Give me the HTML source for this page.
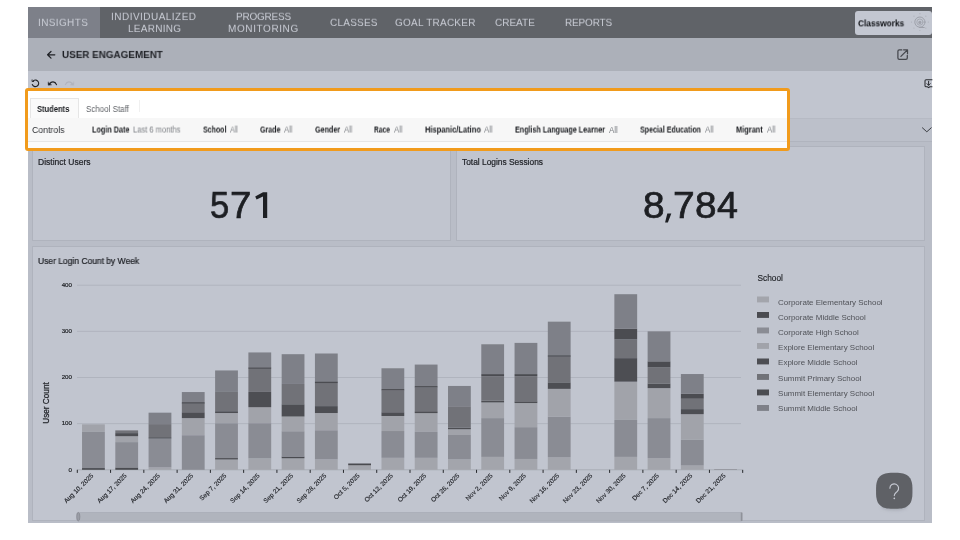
<!DOCTYPE html>
<html>
<head>
<meta charset="utf-8">
<title>User Engagement</title>
<style>
*{box-sizing:border-box;margin:0;padding:0}
html,body{width:960px;height:540px;overflow:hidden;background:#fff}
body{font-family:"Liberation Sans",sans-serif;position:relative;color:#1f2126}
.abs{position:absolute}
#app{position:absolute;left:28px;top:7px;width:904px;height:515.5px;background:#c1c5cf;overflow:hidden}
#nav{position:absolute;left:0;top:0;width:904px;height:31px;background:#606368}
#nav .tab{position:absolute;top:0;height:31px;color:#c6c9d2;font-size:10.5px;letter-spacing:.55px;line-height:11.5px;text-align:center;display:flex;align-items:center;justify-content:center;white-space:nowrap}
#nav .active{background:#7d8089}
#badge{position:absolute;left:827px;top:4px;width:76.5px;height:24px;background:#c3c7d1;border-radius:3px}
#badge span{position:absolute;left:5px;top:6px;font-size:9px;font-weight:bold;color:#2a2c31;letter-spacing:.1px}
#sub{position:absolute;left:0;top:31px;width:904px;height:32.5px;background:#acb0b9}
#sub .title{position:absolute;left:34px;top:10px;font-size:10.5px;font-weight:bold;letter-spacing:.5px;color:#1f2126;white-space:nowrap}
#ctrlrow{position:absolute;left:0;top:111px;width:904px;height:24px;background:#bcc0ca;border-top:1px solid #b6bac4;border-bottom:1px solid #b0b4be}
#gutter{position:absolute;left:0;top:135px;width:904px;height:381px;background:#b9bdc7}
.card{position:absolute;background:#c1c5cf;border:1px solid #afb3bd}
.card .ttl{position:absolute;left:5px;top:5px;font-size:8px;color:#1f2126;white-space:nowrap}
.kpi{position:absolute;font-size:37px;color:#1d1f23;white-space:nowrap;letter-spacing:.5px}
#hl{position:absolute;left:25px;top:88px;width:765px;height:63px;border:3px solid #f19b1c;border-radius:3px;background:#fff;overflow:hidden}
#hl .tabs{position:absolute;left:0;top:0;width:760px;height:27px;background:#fff}
#hl .ctr{position:absolute;left:0;top:27px;width:760px;height:24px;background:#f7f7f7;border-bottom:1px solid #e6e6e6}
#hl .bot{position:absolute;left:0;top:51px;width:760px;height:8px;background:#fbfbfb}
#hl .t1{position:absolute;left:2px;top:7px;width:49px;height:20px;background:#fafafa;border:1px solid #e6e6e6;border-bottom:none}
#hl .t2{position:absolute;left:51px;top:9px;width:60.5px;height:12px;border-right:1px solid #f0f0f0}
.tx{position:absolute;white-space:nowrap;font-size:8px;line-height:10px;will-change:transform}
.b{font-weight:bold;color:#16181c}
.g{color:#7f8287}
</style>
</head>
<body>
<div id="app">
  <div id="nav">
    <div class="abs" style="left:0;top:0;width:72px;height:31px;background:#7d8089"></div>
<span id="n1" class="tx" style="left:10.00px;top:9.80px;font-size:10px;line-height:12.0px;color:#c9ccd5;letter-spacing:0.368px;transform:scaleY(0.9200);transform-origin:0 9.50px;">INSIGHTS</span>
<span id="n2" class="tx" style="left:83.30px;top:3.50px;font-size:10px;line-height:12.0px;color:#c9ccd5;letter-spacing:0.469px;transform:scaleY(0.9200);transform-origin:0 9.50px;">INDIVIDUALIZED</span>
<span id="n3" class="tx" style="left:99.60px;top:15.60px;font-size:10px;line-height:12.0px;color:#c9ccd5;letter-spacing:0.282px;transform:scaleY(0.9200);transform-origin:0 9.50px;">LEARNING</span>
<span id="n4" class="tx" style="left:207.60px;top:3.50px;font-size:10px;line-height:12.0px;color:#c9ccd5;letter-spacing:-0.212px;transform:scaleY(0.9200);transform-origin:0 9.50px;">PROGRESS</span>
<span id="n5" class="tx" style="left:200.30px;top:15.60px;font-size:10px;line-height:12.0px;color:#c9ccd5;letter-spacing:0.599px;transform:scaleY(0.9200);transform-origin:0 9.50px;">MONITORING</span>
<span id="n6" class="tx" style="left:302.40px;top:9.80px;font-size:10px;line-height:12.0px;color:#c9ccd5;letter-spacing:0.228px;transform:scaleY(0.9200);transform-origin:0 9.50px;">CLASSES</span>
<span id="n7" class="tx" style="left:366.90px;top:9.80px;font-size:10px;line-height:12.0px;color:#c9ccd5;letter-spacing:0.237px;transform:scaleY(0.9200);transform-origin:0 9.50px;">GOAL TRACKER</span>
<span id="n8" class="tx" style="left:467.10px;top:9.80px;font-size:10px;line-height:12.0px;color:#c9ccd5;letter-spacing:-0.004px;transform:scaleY(0.9200);transform-origin:0 9.50px;">CREATE</span>
<span id="n9" class="tx" style="left:536.50px;top:9.80px;font-size:10px;line-height:12.0px;color:#c9ccd5;letter-spacing:-0.177px;transform:scaleY(0.9200);transform-origin:0 9.50px;">REPORTS</span>
    <div id="badge"></div>
  </div>
  <div id="sub"></div>
  <div id="ctrlrow"></div>
  <div id="gutter"></div>
  <div class="card" style="left:4px;top:139px;width:419px;height:95px"></div>
  <div class="card" style="left:428px;top:139px;width:469px;height:95px"></div>
  <div class="card" id="chart" style="left:4px;top:239px;width:893px;height:275px"></div>
<span id="a1" class="tx" style="left:34.20px;top:41.60px;font-size:10px;line-height:12.0px;font-weight:bold;color:#1f2126;transform:scale(0.9860,0.9000);transform-origin:0 9.50px;">USER ENGAGEMENT</span>
<span id="a2" class="tx" style="left:830.20px;top:10.60px;font-size:9.0px;line-height:10.8px;font-weight:bold;color:#0e1014;transform:scale(0.9235,1.0800);transform-origin:0 8.40px;">Classworks</span>
<span id="a3" class="tx" style="left:9.50px;top:149.50px;font-size:8.3px;line-height:10.0px;color:#1f2126;transform:scale(1.0256,1.0000);transform-origin:0 8.00px;-webkit-text-stroke:0.22px #1f2126;">Distinct Users</span>
<span id="a4" class="tx" style="left:434.00px;top:149.50px;font-size:8.3px;line-height:10.0px;color:#1f2126;transform:scale(1.0090,1.0000);transform-origin:0 8.00px;-webkit-text-stroke:0.22px #1f2126;">Total Logins Sessions</span>
<span id="a5" class="tx" style="left:9.50px;top:248.55px;font-size:8.7px;line-height:10.4px;color:#1f2126;transform:scale(0.9759,1.0000);transform-origin:0 8.20px;-webkit-text-stroke:0.22px #1f2126;">User Login Count by Week</span>
<span id="g1" class="tx" style="left:182.11px;top:176.50px;font-size:36.5px;line-height:43.8px;color:#1d1f23;-webkit-text-stroke:0.7px #1d1f23;transform:scaleX(0.9444);transform-origin:0 0">5</span>
<span id="g2" class="tx" style="left:202.37px;top:176.50px;font-size:36.5px;line-height:43.8px;color:#1d1f23;-webkit-text-stroke:0.7px #1d1f23;transform:scaleX(1.0520);transform-origin:0 0">7</span>
<span id="g4" class="tx" style="left:615.47px;top:176.50px;font-size:36.5px;line-height:43.8px;color:#1d1f23;-webkit-text-stroke:0.7px #1d1f23;transform:scaleX(1.0646);transform-origin:0 0">8</span>
<span id="g6" class="tx" style="left:645.44px;top:176.50px;font-size:36.5px;line-height:43.8px;color:#1d1f23;-webkit-text-stroke:0.7px #1d1f23;transform:scaleX(1.0694);transform-origin:0 0">7</span>
<span id="g7" class="tx" style="left:666.97px;top:176.50px;font-size:36.5px;line-height:43.8px;color:#1d1f23;-webkit-text-stroke:0.7px #1d1f23;transform:scaleX(1.0618);transform-origin:0 0">8</span>
<span id="g8" class="tx" style="left:688.54px;top:176.50px;font-size:36.5px;line-height:43.8px;color:#1d1f23;-webkit-text-stroke:0.7px #1d1f23;transform:scaleX(1.0314);transform-origin:0 0">4</span>
</div>
<svg class="abs" style="left:0;top:0" width="960" height="540" viewBox="0 0 960 540" font-family="Liberation Sans, sans-serif">
<line x1="77" x2="741" y1="423.65" y2="423.65" stroke="#b0b4be" stroke-width="1"/>
<line x1="77" x2="741" y1="377.50" y2="377.50" stroke="#b0b4be" stroke-width="1"/>
<line x1="77" x2="741" y1="331.35" y2="331.35" stroke="#b0b4be" stroke-width="1"/>
<line x1="77" x2="741" y1="285.20" y2="285.20" stroke="#b0b4be" stroke-width="1"/>
<line x1="77" x2="742" y1="469.8" y2="469.8" stroke="#a9adb6" stroke-width="1"/>
<rect x="82.03" y="468.05" width="22.8" height="1.75" fill="#4a4b50"/>
<rect x="82.03" y="431.96" width="22.8" height="36.09" fill="#8a8c94"/>
<rect x="82.03" y="424.34" width="22.8" height="7.61" fill="#a1a3aa"/>
<rect x="115.30" y="467.49" width="22.8" height="2.31" fill="#4a4b50"/>
<rect x="115.30" y="442.11" width="22.8" height="25.38" fill="#8a8c94"/>
<rect x="115.30" y="436.20" width="22.8" height="5.91" fill="#a1a3aa"/>
<rect x="115.30" y="433.11" width="22.8" height="3.09" fill="#4d4e53"/>
<rect x="115.30" y="430.39" width="22.8" height="2.72" fill="#717278"/>
<rect x="148.58" y="467.31" width="22.8" height="2.49" fill="#a3a5ac"/>
<rect x="148.58" y="438.51" width="22.8" height="28.80" fill="#8a8c94"/>
<rect x="148.58" y="424.11" width="22.8" height="13.15" fill="#717278"/>
<rect x="148.58" y="412.67" width="22.8" height="11.45" fill="#7e8088"/>
<rect x="148.58" y="437.24" width="22.8" height="1.30" fill="#4d4e53"/>
<rect x="181.84" y="435.19" width="22.8" height="34.61" fill="#8a8c94"/>
<rect x="181.84" y="418.11" width="22.8" height="17.08" fill="#a1a3aa"/>
<rect x="181.84" y="412.25" width="22.8" height="5.86" fill="#4d4e53"/>
<rect x="181.84" y="403.07" width="22.8" height="9.18" fill="#717278"/>
<rect x="181.84" y="392.04" width="22.8" height="10.57" fill="#7e8088"/>
<rect x="181.84" y="402.19" width="22.8" height="1.30" fill="#4b4c51"/>
<rect x="215.11" y="459.28" width="22.8" height="10.52" fill="#a3a5ac"/>
<rect x="215.11" y="423.23" width="22.8" height="35.03" fill="#8a8c94"/>
<rect x="215.11" y="413.04" width="22.8" height="10.20" fill="#a1a3aa"/>
<rect x="215.11" y="411.19" width="22.8" height="1.85" fill="#4d4e53"/>
<rect x="215.11" y="391.94" width="22.8" height="19.24" fill="#717278"/>
<rect x="215.11" y="370.44" width="22.8" height="21.51" fill="#7e8088"/>
<rect x="215.11" y="458.12" width="22.8" height="1.30" fill="#4a4b50"/>
<rect x="248.39" y="458.26" width="22.8" height="11.54" fill="#a3a5ac"/>
<rect x="248.39" y="423.19" width="22.8" height="35.07" fill="#8a8c94"/>
<rect x="248.39" y="407.22" width="22.8" height="15.97" fill="#a1a3aa"/>
<rect x="248.39" y="391.94" width="22.8" height="15.28" fill="#4d4e53"/>
<rect x="248.39" y="368.45" width="22.8" height="23.49" fill="#717278"/>
<rect x="248.39" y="352.44" width="22.8" height="15.46" fill="#7e8088"/>
<rect x="248.39" y="367.53" width="22.8" height="1.30" fill="#4b4c51"/>
<rect x="281.66" y="458.26" width="22.8" height="11.54" fill="#a3a5ac"/>
<rect x="281.66" y="456.55" width="22.8" height="1.71" fill="#4a4b50"/>
<rect x="281.66" y="431.26" width="22.8" height="25.29" fill="#8a8c94"/>
<rect x="281.66" y="416.50" width="22.8" height="14.77" fill="#a1a3aa"/>
<rect x="281.66" y="404.27" width="22.8" height="12.23" fill="#4d4e53"/>
<rect x="281.66" y="383.96" width="22.8" height="20.31" fill="#717278"/>
<rect x="281.66" y="354.19" width="22.8" height="29.77" fill="#7e8088"/>
<rect x="314.93" y="459.28" width="22.8" height="10.52" fill="#a3a5ac"/>
<rect x="314.93" y="430.25" width="22.8" height="29.03" fill="#8a8c94"/>
<rect x="314.93" y="413.04" width="22.8" height="17.21" fill="#a1a3aa"/>
<rect x="314.93" y="406.11" width="22.8" height="6.92" fill="#4d4e53"/>
<rect x="314.93" y="382.71" width="22.8" height="23.40" fill="#717278"/>
<rect x="314.93" y="353.50" width="22.8" height="28.61" fill="#7e8088"/>
<rect x="314.93" y="381.76" width="22.8" height="1.30" fill="#4b4c51"/>
<rect x="348.20" y="465.05" width="22.8" height="4.75" fill="#a3a5ac"/>
<rect x="348.20" y="463.06" width="22.8" height="0.97" fill="#8a8c94"/>
<rect x="348.20" y="463.89" width="22.8" height="1.30" fill="#4a4b50"/>
<rect x="381.47" y="457.80" width="22.8" height="12.00" fill="#a3a5ac"/>
<rect x="381.47" y="431.03" width="22.8" height="26.77" fill="#8a8c94"/>
<rect x="381.47" y="415.99" width="22.8" height="15.04" fill="#a1a3aa"/>
<rect x="381.47" y="412.25" width="22.8" height="3.74" fill="#4d4e53"/>
<rect x="381.47" y="390.19" width="22.8" height="22.06" fill="#717278"/>
<rect x="381.47" y="368.27" width="22.8" height="20.95" fill="#7e8088"/>
<rect x="381.47" y="389.06" width="22.8" height="1.30" fill="#4b4c51"/>
<rect x="414.74" y="457.80" width="22.8" height="12.00" fill="#a3a5ac"/>
<rect x="414.74" y="431.96" width="22.8" height="25.84" fill="#8a8c94"/>
<rect x="414.74" y="412.76" width="22.8" height="19.20" fill="#a1a3aa"/>
<rect x="414.74" y="387.19" width="22.8" height="24.92" fill="#717278"/>
<rect x="414.74" y="364.58" width="22.8" height="21.69" fill="#7e8088"/>
<rect x="414.74" y="411.79" width="22.8" height="1.30" fill="#4d4e53"/>
<rect x="414.74" y="386.08" width="22.8" height="1.30" fill="#4b4c51"/>
<rect x="448.01" y="459.28" width="22.8" height="10.52" fill="#a3a5ac"/>
<rect x="448.01" y="435.00" width="22.8" height="24.27" fill="#8a8c94"/>
<rect x="448.01" y="429.23" width="22.8" height="5.77" fill="#a1a3aa"/>
<rect x="448.01" y="427.53" width="22.8" height="1.71" fill="#4d4e53"/>
<rect x="448.01" y="406.25" width="22.8" height="21.28" fill="#717278"/>
<rect x="448.01" y="385.95" width="22.8" height="20.31" fill="#7e8088"/>
<rect x="481.28" y="456.88" width="22.8" height="12.92" fill="#a3a5ac"/>
<rect x="481.28" y="418.11" width="22.8" height="38.77" fill="#8a8c94"/>
<rect x="481.28" y="402.42" width="22.8" height="15.69" fill="#a1a3aa"/>
<rect x="481.28" y="400.76" width="22.8" height="1.66" fill="#4d4e53"/>
<rect x="481.28" y="376.21" width="22.8" height="24.55" fill="#717278"/>
<rect x="481.28" y="374.08" width="22.8" height="2.12" fill="#4b4c51"/>
<rect x="481.28" y="344.27" width="22.8" height="29.81" fill="#7e8088"/>
<rect x="514.55" y="458.95" width="22.8" height="10.85" fill="#a3a5ac"/>
<rect x="514.55" y="427.16" width="22.8" height="31.80" fill="#8a8c94"/>
<rect x="514.55" y="403.07" width="22.8" height="24.09" fill="#a1a3aa"/>
<rect x="514.55" y="401.31" width="22.8" height="1.75" fill="#4d4e53"/>
<rect x="514.55" y="376.21" width="22.8" height="25.11" fill="#717278"/>
<rect x="514.55" y="374.08" width="22.8" height="2.12" fill="#4b4c51"/>
<rect x="514.55" y="342.89" width="22.8" height="31.20" fill="#7e8088"/>
<rect x="547.82" y="457.15" width="22.8" height="12.65" fill="#a3a5ac"/>
<rect x="547.82" y="416.73" width="22.8" height="40.43" fill="#8a8c94"/>
<rect x="547.82" y="388.85" width="22.8" height="27.87" fill="#a1a3aa"/>
<rect x="547.82" y="382.35" width="22.8" height="6.51" fill="#4d4e53"/>
<rect x="547.82" y="356.27" width="22.8" height="26.07" fill="#717278"/>
<rect x="547.82" y="321.66" width="22.8" height="34.06" fill="#7e8088"/>
<rect x="547.82" y="355.34" width="22.8" height="1.30" fill="#4b4c51"/>
<rect x="614.36" y="456.88" width="22.8" height="12.92" fill="#a3a5ac"/>
<rect x="614.36" y="419.96" width="22.8" height="36.92" fill="#8a8c94"/>
<rect x="614.36" y="381.65" width="22.8" height="38.30" fill="#a1a3aa"/>
<rect x="614.36" y="358.12" width="22.8" height="23.54" fill="#4d4e53"/>
<rect x="614.36" y="339.38" width="22.8" height="18.74" fill="#717278"/>
<rect x="614.36" y="328.81" width="22.8" height="10.57" fill="#4b4c51"/>
<rect x="614.36" y="294.20" width="22.8" height="34.61" fill="#7e8088"/>
<rect x="647.62" y="457.99" width="22.8" height="11.81" fill="#a3a5ac"/>
<rect x="647.62" y="418.11" width="22.8" height="39.87" fill="#8a8c94"/>
<rect x="647.62" y="388.11" width="22.8" height="30.00" fill="#a1a3aa"/>
<rect x="647.62" y="383.50" width="22.8" height="4.62" fill="#4d4e53"/>
<rect x="647.62" y="367.35" width="22.8" height="16.15" fill="#717278"/>
<rect x="647.62" y="361.35" width="22.8" height="6.00" fill="#4b4c51"/>
<rect x="647.62" y="331.35" width="22.8" height="30.00" fill="#7e8088"/>
<rect x="680.89" y="465.46" width="22.8" height="4.34" fill="#a3a5ac"/>
<rect x="680.89" y="439.80" width="22.8" height="25.66" fill="#8a8c94"/>
<rect x="680.89" y="414.19" width="22.8" height="25.61" fill="#a1a3aa"/>
<rect x="680.89" y="409.11" width="22.8" height="5.08" fill="#4d4e53"/>
<rect x="680.89" y="398.73" width="22.8" height="10.38" fill="#717278"/>
<rect x="680.89" y="393.88" width="22.8" height="4.85" fill="#4b4c51"/>
<rect x="680.89" y="374.04" width="22.8" height="19.84" fill="#7e8088"/>
<rect x="714.17" y="469.15" width="22.8" height="0.65" fill="#8a8c94"/>
<line x1="77.30" x2="77.30" y1="469.8" y2="472.90000000000003" stroke="#26282c" stroke-width="1"/>
<line x1="110.57" x2="110.57" y1="469.8" y2="472.90000000000003" stroke="#26282c" stroke-width="1"/>
<line x1="143.84" x2="143.84" y1="469.8" y2="472.90000000000003" stroke="#26282c" stroke-width="1"/>
<line x1="177.11" x2="177.11" y1="469.8" y2="472.90000000000003" stroke="#26282c" stroke-width="1"/>
<line x1="210.38" x2="210.38" y1="469.8" y2="472.90000000000003" stroke="#26282c" stroke-width="1"/>
<line x1="243.65" x2="243.65" y1="469.8" y2="472.90000000000003" stroke="#26282c" stroke-width="1"/>
<line x1="276.92" x2="276.92" y1="469.8" y2="472.90000000000003" stroke="#26282c" stroke-width="1"/>
<line x1="310.19" x2="310.19" y1="469.8" y2="472.90000000000003" stroke="#26282c" stroke-width="1"/>
<line x1="343.46" x2="343.46" y1="469.8" y2="472.90000000000003" stroke="#26282c" stroke-width="1"/>
<line x1="376.73" x2="376.73" y1="469.8" y2="472.90000000000003" stroke="#26282c" stroke-width="1"/>
<line x1="410.00" x2="410.00" y1="469.8" y2="472.90000000000003" stroke="#26282c" stroke-width="1"/>
<line x1="443.27" x2="443.27" y1="469.8" y2="472.90000000000003" stroke="#26282c" stroke-width="1"/>
<line x1="476.54" x2="476.54" y1="469.8" y2="472.90000000000003" stroke="#26282c" stroke-width="1"/>
<line x1="509.81" x2="509.81" y1="469.8" y2="472.90000000000003" stroke="#26282c" stroke-width="1"/>
<line x1="543.08" x2="543.08" y1="469.8" y2="472.90000000000003" stroke="#26282c" stroke-width="1"/>
<line x1="576.35" x2="576.35" y1="469.8" y2="472.90000000000003" stroke="#26282c" stroke-width="1"/>
<line x1="609.62" x2="609.62" y1="469.8" y2="472.90000000000003" stroke="#26282c" stroke-width="1"/>
<line x1="642.89" x2="642.89" y1="469.8" y2="472.90000000000003" stroke="#26282c" stroke-width="1"/>
<line x1="676.16" x2="676.16" y1="469.8" y2="472.90000000000003" stroke="#26282c" stroke-width="1"/>
<line x1="709.43" x2="709.43" y1="469.8" y2="472.90000000000003" stroke="#26282c" stroke-width="1"/>
<line x1="742.70" x2="742.70" y1="469.8" y2="472.90000000000003" stroke="#26282c" stroke-width="1"/>
<text x="72.0" y="471.55" font-size="6.2" text-anchor="end" fill="#1a1c20" stroke="#1a1c20" stroke-width="0.18">0</text>
<text x="72.0" y="425.40" font-size="6.2" text-anchor="end" fill="#1a1c20" stroke="#1a1c20" stroke-width="0.18">100</text>
<text x="72.0" y="379.25" font-size="6.2" text-anchor="end" fill="#1a1c20" stroke="#1a1c20" stroke-width="0.18">200</text>
<text x="72.0" y="333.10" font-size="6.2" text-anchor="end" fill="#1a1c20" stroke="#1a1c20" stroke-width="0.18">300</text>
<text x="72.0" y="286.95" font-size="6.2" text-anchor="end" fill="#1a1c20" stroke="#1a1c20" stroke-width="0.18">400</text>
<text transform="translate(93.84,476.2) rotate(-45)" font-size="6.5" text-anchor="end" fill="#1f2126" stroke="#1f2126" stroke-width="0.15">Aug 10, 2025</text>
<text transform="translate(127.11,476.2) rotate(-45)" font-size="6.5" text-anchor="end" fill="#1f2126" stroke="#1f2126" stroke-width="0.15">Aug 17, 2025</text>
<text transform="translate(160.38,476.2) rotate(-45)" font-size="6.5" text-anchor="end" fill="#1f2126" stroke="#1f2126" stroke-width="0.15">Aug 24, 2025</text>
<text transform="translate(193.65,476.2) rotate(-45)" font-size="6.5" text-anchor="end" fill="#1f2126" stroke="#1f2126" stroke-width="0.15">Aug 31, 2025</text>
<text transform="translate(226.91,476.2) rotate(-45)" font-size="6.5" text-anchor="end" fill="#1f2126" stroke="#1f2126" stroke-width="0.15">Sep 7, 2025</text>
<text transform="translate(260.19,476.2) rotate(-45)" font-size="6.5" text-anchor="end" fill="#1f2126" stroke="#1f2126" stroke-width="0.15">Sep 14, 2025</text>
<text transform="translate(293.45,476.2) rotate(-45)" font-size="6.5" text-anchor="end" fill="#1f2126" stroke="#1f2126" stroke-width="0.15">Sep 21, 2025</text>
<text transform="translate(326.73,476.2) rotate(-45)" font-size="6.5" text-anchor="end" fill="#1f2126" stroke="#1f2126" stroke-width="0.15">Sep 28, 2025</text>
<text transform="translate(360.00,476.2) rotate(-45)" font-size="6.5" text-anchor="end" fill="#1f2126" stroke="#1f2126" stroke-width="0.15">Oct 5, 2025</text>
<text transform="translate(393.27,476.2) rotate(-45)" font-size="6.5" text-anchor="end" fill="#1f2126" stroke="#1f2126" stroke-width="0.15">Oct 12, 2025</text>
<text transform="translate(426.54,476.2) rotate(-45)" font-size="6.5" text-anchor="end" fill="#1f2126" stroke="#1f2126" stroke-width="0.15">Oct 19, 2025</text>
<text transform="translate(459.81,476.2) rotate(-45)" font-size="6.5" text-anchor="end" fill="#1f2126" stroke="#1f2126" stroke-width="0.15">Oct 26, 2025</text>
<text transform="translate(493.08,476.2) rotate(-45)" font-size="6.5" text-anchor="end" fill="#1f2126" stroke="#1f2126" stroke-width="0.15">Nov 2, 2025</text>
<text transform="translate(526.35,476.2) rotate(-45)" font-size="6.5" text-anchor="end" fill="#1f2126" stroke="#1f2126" stroke-width="0.15">Nov 9, 2025</text>
<text transform="translate(559.62,476.2) rotate(-45)" font-size="6.5" text-anchor="end" fill="#1f2126" stroke="#1f2126" stroke-width="0.15">Nov 16, 2025</text>
<text transform="translate(592.88,476.2) rotate(-45)" font-size="6.5" text-anchor="end" fill="#1f2126" stroke="#1f2126" stroke-width="0.15">Nov 23, 2025</text>
<text transform="translate(626.15,476.2) rotate(-45)" font-size="6.5" text-anchor="end" fill="#1f2126" stroke="#1f2126" stroke-width="0.15">Nov 30, 2025</text>
<text transform="translate(659.42,476.2) rotate(-45)" font-size="6.5" text-anchor="end" fill="#1f2126" stroke="#1f2126" stroke-width="0.15">Dec 7, 2025</text>
<text transform="translate(692.69,476.2) rotate(-45)" font-size="6.5" text-anchor="end" fill="#1f2126" stroke="#1f2126" stroke-width="0.15">Dec 14, 2025</text>
<text transform="translate(725.97,476.2) rotate(-45)" font-size="6.5" text-anchor="end" fill="#1f2126" stroke="#1f2126" stroke-width="0.15">Dec 21, 2025</text>
<text transform="translate(49.4,403) rotate(-90)" font-size="8.6" text-anchor="middle" textLength="41.6" lengthAdjust="spacingAndGlyphs" fill="#1f2126" stroke="#1f2126" stroke-width="0.25">User Count</text>
<text x="757.5" y="280.9" font-size="8.3" fill="#1f2126" stroke="#1f2126" stroke-width="0.15">School</text>
<rect x="757" y="296.50" width="12" height="5.9" fill="#a3a5ac"/>
<text x="778.1" y="305.00" font-size="7.97" fill="#505258">Corporate Elementary School</text>
<rect x="757" y="312.00" width="12" height="5.9" fill="#4a4b50"/>
<text x="778.1" y="320.10" font-size="7.97" fill="#505258">Corporate Middle School</text>
<rect x="757" y="327.50" width="12" height="5.9" fill="#8a8c94"/>
<text x="778.1" y="335.20" font-size="7.97" fill="#505258">Corporate High School</text>
<rect x="757" y="343.00" width="12" height="5.9" fill="#a1a3aa"/>
<text x="778.1" y="350.30" font-size="7.97" fill="#505258">Explore Elementary School</text>
<rect x="757" y="358.50" width="12" height="5.9" fill="#4d4e53"/>
<text x="778.1" y="365.40" font-size="7.97" fill="#505258">Explore Middle School</text>
<rect x="757" y="374.00" width="12" height="5.9" fill="#717278"/>
<text x="778.1" y="380.50" font-size="7.97" fill="#505258">Summit Primary School</text>
<rect x="757" y="389.50" width="12" height="5.9" fill="#4b4c51"/>
<text x="778.1" y="395.60" font-size="7.97" fill="#505258">Summit Elementary School</text>
<rect x="757" y="405.00" width="12" height="5.9" fill="#7e8088"/>
<text x="778.1" y="410.70" font-size="7.97" fill="#505258">Summit Middle School</text>
<rect x="77" y="512.5" width="665" height="8.5" fill="#b0b4bd" stroke="#a4a8b1" stroke-width="0.6" rx="1"/>
<ellipse cx="78.3" cy="516.7" rx="1.6" ry="4.2" fill="#9a9da6" stroke="#7d8088" stroke-width="0.6"/>
<rect x="740.8" y="512.5" width="1.6" height="8.5" fill="#8f929a"/>
</svg>
<div id="hl">
  <div class="tabs"></div><div class="t1"></div><div class="t2"></div>
  <div class="ctr"></div><div class="bot"></div>
<span id="s1" class="tx" style="left:8.90px;top:12.60px;font-size:8.3px;line-height:10.0px;font-weight:bold;color:#16181c;transform:scale(0.9098,1.0000);transform-origin:0 8.00px;">Students</span>
<span id="s2" class="tx" style="left:57.60px;top:12.60px;font-size:8.3px;line-height:10.0px;color:#5e6166;transform:scale(0.9596,1.0000);transform-origin:0 8.00px;">School Staff</span>
<span id="c0" class="tx" style="left:3.90px;top:33.35px;font-size:9.4px;line-height:11.3px;color:#2b2d31;transform:scale(0.9286,1.0000);transform-origin:0 9.15px;">Controls</span>
<span id="c1" class="tx" style="left:63.80px;top:34.70px;font-size:8.0px;line-height:9.6px;font-weight:bold;color:#16181c;transform:scale(0.9049,1.0600);transform-origin:0 7.30px;">Login Date</span>
<span id="d1" class="tx" style="left:104.60px;top:34.70px;font-size:8.0px;line-height:9.6px;color:#7e8186;transform:scale(0.9434,1.0600);transform-origin:0 7.30px;">Last 6 months</span>
<span id="c2" class="tx" style="left:174.60px;top:34.70px;font-size:8.0px;line-height:9.6px;font-weight:bold;color:#16181c;transform:scale(0.8775,1.0600);transform-origin:0 7.30px;">School</span>
<span id="d2" class="tx" style="left:201.60px;top:34.70px;font-size:8.0px;line-height:9.6px;color:#7e8186;transform:scale(0.8885,1.0600);transform-origin:0 7.30px;">All</span>
<span id="c3" class="tx" style="left:232.30px;top:34.70px;font-size:8.0px;line-height:9.6px;font-weight:bold;color:#16181c;transform:scale(0.8824,1.0600);transform-origin:0 7.30px;">Grade</span>
<span id="d3" class="tx" style="left:256.30px;top:34.70px;font-size:8.0px;line-height:9.6px;color:#7e8186;transform:scale(0.9560,1.0600);transform-origin:0 7.30px;">All</span>
<span id="c4" class="tx" style="left:287.10px;top:34.70px;font-size:8.0px;line-height:9.6px;font-weight:bold;color:#16181c;transform:scale(0.8962,1.0600);transform-origin:0 7.30px;">Gender</span>
<span id="d4" class="tx" style="left:315.80px;top:34.70px;font-size:8.0px;line-height:9.6px;color:#7e8186;transform:scale(0.9447,1.0600);transform-origin:0 7.30px;">All</span>
<span id="c5" class="tx" style="left:346.40px;top:34.70px;font-size:8.0px;line-height:9.6px;font-weight:bold;color:#16181c;transform:scale(0.8314,1.0600);transform-origin:0 7.30px;">Race</span>
<span id="d5" class="tx" style="left:365.90px;top:34.70px;font-size:8.0px;line-height:9.6px;color:#7e8186;transform:scale(0.9672,1.0600);transform-origin:0 7.30px;">All</span>
<span id="c6" class="tx" style="left:396.60px;top:34.70px;font-size:8.0px;line-height:9.6px;font-weight:bold;color:#16181c;transform:scale(0.9386,1.0600);transform-origin:0 7.30px;">Hispanic/Latino</span>
<span id="d6" class="tx" style="left:456.30px;top:34.70px;font-size:8.0px;line-height:9.6px;color:#7e8186;transform:scale(0.9785,1.0600);transform-origin:0 7.30px;">All</span>
<span id="c7" class="tx" style="left:487.10px;top:34.70px;font-size:8.0px;line-height:9.6px;font-weight:bold;color:#16181c;transform:scale(0.8959,1.0600);transform-origin:0 7.30px;">English Language Learner</span>
<span id="d7" class="tx" style="left:580.70px;top:34.70px;font-size:8.0px;line-height:9.6px;color:#7e8186;transform:scale(1.0010,1.0600);transform-origin:0 7.30px;">All</span>
<span id="c8" class="tx" style="left:611.90px;top:34.70px;font-size:8.0px;line-height:9.6px;font-weight:bold;color:#16181c;transform:scale(0.8839,1.0600);transform-origin:0 7.30px;">Special Education</span>
<span id="d8" class="tx" style="left:676.70px;top:34.70px;font-size:8.0px;line-height:9.6px;color:#7e8186;transform:scale(0.9897,1.0600);transform-origin:0 7.30px;">All</span>
<span id="c9" class="tx" style="left:707.90px;top:34.70px;font-size:8.0px;line-height:9.6px;font-weight:bold;color:#16181c;transform:scale(0.9244,1.0600);transform-origin:0 7.30px;">Migrant</span>
<span id="d9" class="tx" style="left:738.50px;top:34.70px;font-size:8.0px;line-height:9.6px;color:#7e8186;transform:scale(0.9672,1.0600);transform-origin:0 7.30px;">All</span>
</div>
<svg class="abs" style="left:0;top:0" width="960" height="540" viewBox="0 0 960 540" fill="none" stroke-linecap="round" stroke-linejoin="round">
  <!-- digit 1 -->
  <path d="M263 192.2H267.2V218H263V196.6L256.6 199.6L255.2 196.4Z" fill="#1d1f23" stroke="none"/>
  <path d="M667.3 213.6H671.3L667.9 222.4H665.1Z" fill="#1d1f23" stroke="none"/>
  <!-- back arrow -->
  <path d="M54.8 54.8H47.8M51 51.5L47.6 54.8L51 58.1" stroke="#1f2126" stroke-width="1.25"/>
  <!-- refresh -->
  <path d="M33.5 80.6A3.3 3.3 0 1 1 32.3 84.5" stroke="#222428" stroke-width="1.1"/>
  <path d="M32.1 79.9V81.5H33.7" stroke="#222428" stroke-width="0.9"/>
  <!-- undo -->
  <path d="M49.6 83.9C51.2 81.2 55 81 56.5 84.6" stroke="#222428" stroke-width="1.15"/>
  <path d="M48.1 82.2L48.2 85.2L51.3 84.9Z" fill="#222428" stroke="#222428" stroke-width="0.4"/>
  <!-- redo -->
  <path d="M72.3 83.9C70.7 81.2 66.9 81 65.4 84.6" stroke="#b0b4be" stroke-width="1.1"/>
  <path d="M73.8 82.2L73.7 85.2L70.6 84.9Z" fill="#b0b4be" stroke="#b0b4be" stroke-width="0.4"/>
  <!-- external link -->
  <path d="M901.8 49.9H899.3Q897.9 49.9 897.9 51.3V57.9Q897.9 59.3 899.3 59.3H905.9Q907.3 59.3 907.3 57.9V55.4" stroke="#45474d" stroke-width="1.25"/>
  <path d="M903.6 49.8H907.5V53.7M907.2 50.1L900.9 56.4" stroke="#45474d" stroke-width="1.25"/>
  <!-- download -->
  <path d="M932 79.7H926.1Q925 79.7 925 80.8V85.7Q925 86.8 926.1 86.8H927.3L928.6 87.6L929.9 86.8H932" stroke="#2a2c31" stroke-width="1.05"/>
  <path d="M928.6 81.3V85.2M927 83.7L928.6 85.3L930.2 83.7" stroke="#2a2c31" stroke-width="1"/>
  <!-- chevron -->
  <path d="M922.4 127.8L926.8 131.8L931.2 127.8" stroke="#3b3d42" stroke-width="1"/>
  <!-- logo -->
  <circle cx="919.9" cy="22.1" r="5.1" stroke="#9da0a9" stroke-width="1"/>
  <circle cx="919.9" cy="22.1" r="3.1" stroke="#a3a6af" stroke-width="0.9"/>
  <circle cx="919.9" cy="22.4" r="1.6" fill="#a0a3ac" stroke="none"/>
  <path d="M919.5 27.5H924.2" stroke="#9da0a9" stroke-width="1"/>
  <circle cx="928.30" cy="22.10" r="0.6" fill="#adb0b9" stroke="none"/><circle cx="925.84" cy="28.04" r="0.6" fill="#adb0b9" stroke="none"/><circle cx="919.90" cy="30.50" r="0.6" fill="#adb0b9" stroke="none"/><circle cx="913.96" cy="28.04" r="0.6" fill="#adb0b9" stroke="none"/><circle cx="911.50" cy="22.10" r="0.6" fill="#adb0b9" stroke="none"/><circle cx="913.96" cy="16.16" r="0.6" fill="#adb0b9" stroke="none"/><circle cx="919.90" cy="13.70" r="0.6" fill="#adb0b9" stroke="none"/><circle cx="925.84" cy="16.16" r="0.6" fill="#adb0b9" stroke="none"/>
  <!-- help -->
  <defs><filter id="sh" x="-30%" y="-30%" width="160%" height="170%"><feGaussianBlur stdDeviation="1.6"/></filter></defs>
  <ellipse cx="894.2" cy="506.5" rx="13" ry="4" fill="#a9adb7" stroke="none" filter="url(#sh)"/>
  <path d="M912.45 490.80L912.40 494.34L912.27 496.40L912.03 498.11L911.71 499.60L911.29 500.94L910.79 502.14L910.18 503.23L909.49 504.21L908.70 505.09L907.81 505.87L906.81 506.56L905.72 507.15L904.50 507.66L903.15 508.07L901.64 508.39L899.91 508.62L897.83 508.75L894.25 508.80L890.67 508.75L888.59 508.62L886.86 508.39L885.35 508.07L884.00 507.66L882.78 507.15L881.69 506.56L880.69 505.87L879.80 505.09L879.01 504.21L878.32 503.23L877.71 502.14L877.21 500.94L876.79 499.60L876.47 498.11L876.23 496.40L876.10 494.34L876.05 490.80L876.10 487.26L876.23 485.20L876.47 483.49L876.79 482.00L877.21 480.66L877.71 479.46L878.32 478.37L879.01 477.39L879.80 476.51L880.69 475.73L881.69 475.04L882.78 474.45L884.00 473.94L885.35 473.53L886.86 473.21L888.59 472.98L890.67 472.85L894.25 472.80L897.83 472.85L899.91 472.98L901.64 473.21L903.15 473.53L904.50 473.94L905.72 474.45L906.81 475.04L907.81 475.73L908.70 476.51L909.49 477.39L910.18 478.37L910.79 479.46L911.29 480.66L911.71 482.00L912.03 483.49L912.27 485.20L912.40 487.26Z" fill="#5f6166" stroke="none"/>
  <path d="M889.9 488.2A4.35 4.35 0 1 1 897.3 491.3C895.6 492.9 894.3 493.4 894.3 495.6" stroke="#c6c9d2" stroke-width="1.15" fill="none"/>
  <circle cx="894.3" cy="498.3" r="0.85" fill="#c6c9d2" stroke="none"/>
</svg>

</body>
</html>
